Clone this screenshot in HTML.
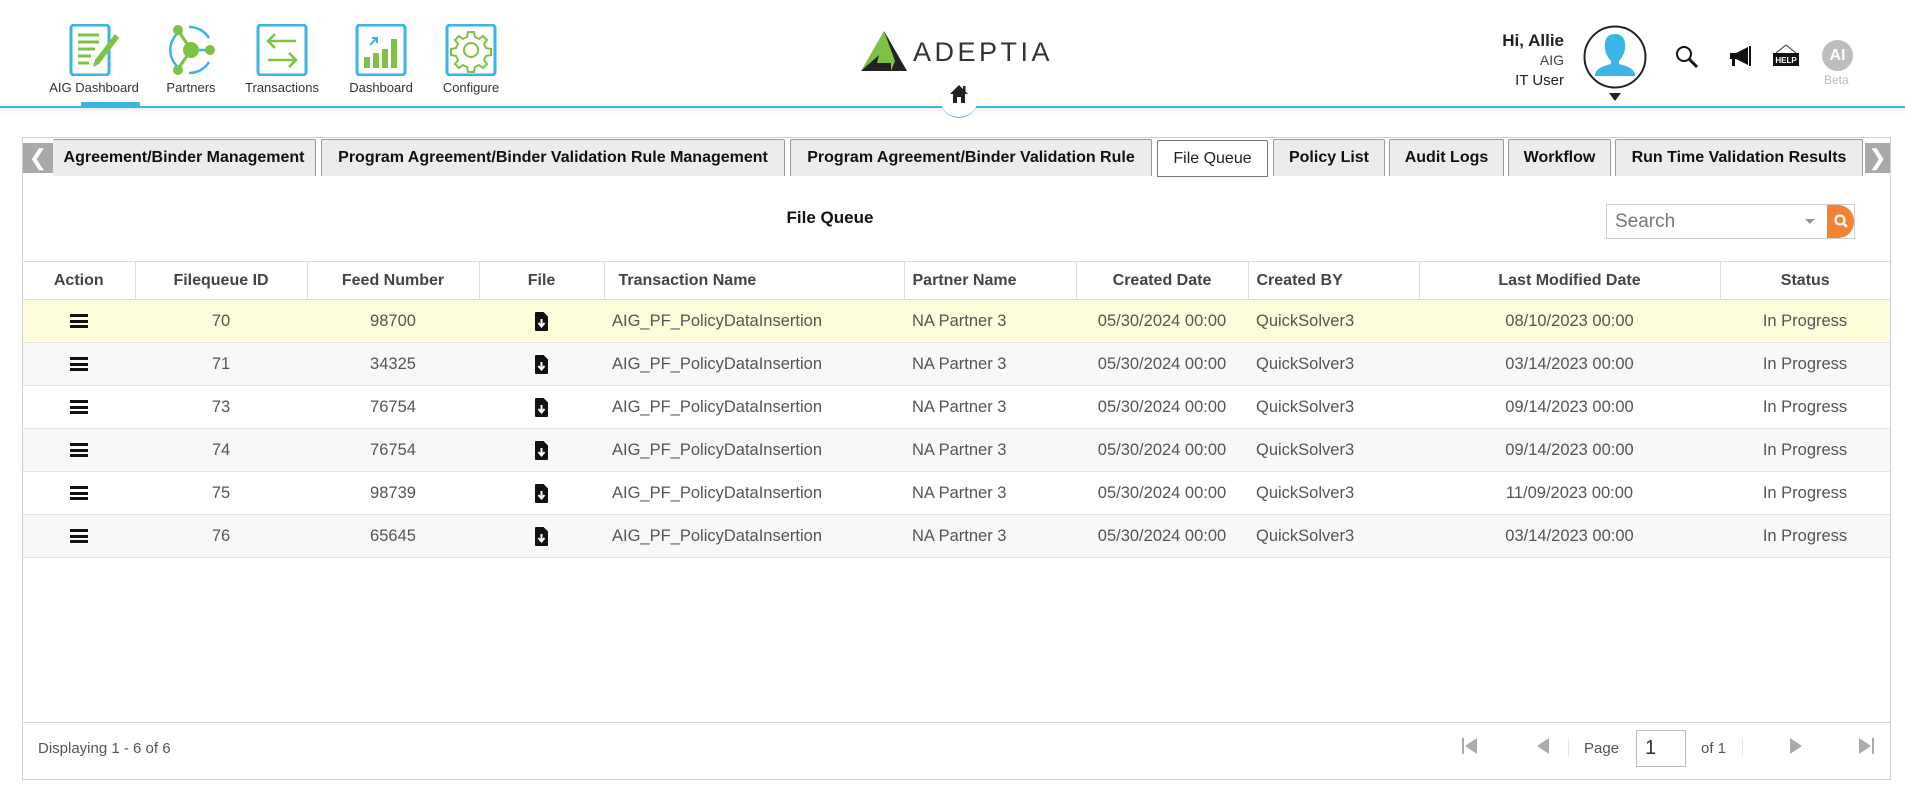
<!DOCTYPE html>
<html><head><meta charset="utf-8"><style>
*{box-sizing:border-box;margin:0;padding:0}
body{width:1905px;height:798px;background:#fff;font-family:"Liberation Sans",Arial,sans-serif;position:relative;overflow:hidden;color:#333}
.abs{position:absolute}
.nav{position:absolute;top:24px;width:52px;height:52px}
.navl{position:absolute;top:80px;font-size:13px;color:#333;white-space:nowrap;transform:translateX(-50%)}
.tab{position:absolute;top:139px;height:37px;border:1px solid #999;border-bottom:none;background:#ececec;font-weight:bold;font-size:16px;color:#111;text-align:center;line-height:36px;white-space:nowrap;border-radius:2px 2px 0 0}
.tab.act{background:#fff;font-weight:normal;border-color:#777;color:#222;font-size:16px}
table{position:absolute;left:23px;top:261px;width:1867px;border-collapse:collapse;font-size:16.5px;color:#555}
th{height:38px;font-weight:bold;color:#444;font-size:16px;border-left:1px solid #ddd;border-bottom:1px solid #ddd;border-top:1px solid #ddd;background:#fff}
th:first-child{border-left:none}
td{height:43px;border-bottom:1px solid #e2e2e2}
tr.y td{background:#fdfdd9}
tr.g td{background:#f8f8f8}
.c{text-align:center}.l{text-align:left;padding-left:8px}
.menu{display:inline-block;width:18px;height:14px;border-top:3px solid #111;border-bottom:3px solid #111;position:relative;vertical-align:middle}
.menu:after{content:"";position:absolute;left:0;right:0;top:2.5px;height:3px;background:#111}
.fi{vertical-align:middle}
</style></head><body>

<svg class="nav" style="left:69px" viewBox="0 0 52 52"><rect x="2" y="1" width="38" height="50" rx="3" fill="none" stroke="#3bb5e6" stroke-width="3"/><g stroke="#7dc242" stroke-width="3"><line x1="9" y1="11" x2="30" y2="11"/><line x1="9" y1="18" x2="30" y2="18"/><line x1="9" y1="25" x2="26" y2="25"/><line x1="9" y1="32" x2="22" y2="32"/><line x1="9" y1="39" x2="20" y2="39"/></g><path d="M46 10 L50 14 L30 40 L24 43 L26 36 Z" fill="#7dc242"/></svg>
<svg class="nav" style="left:165px" viewBox="0 0 52 52"><path d="M14 8 A23 23 0 0 0 14 44" fill="none" stroke="#3bb5e6" stroke-width="2.5"/><path d="M24 3 A23 23 0 0 1 44 14 M44 38 A23 23 0 0 1 24 49" fill="none" stroke="#3bb5e6" stroke-width="2.5"/><line x1="26" y1="26" x2="13" y2="6" stroke="#7dc242" stroke-width="3"/><line x1="26" y1="26" x2="13" y2="45" stroke="#7dc242" stroke-width="3"/><line x1="26" y1="26" x2="44" y2="26" stroke="#3bb5e6" stroke-width="2.5"/><circle cx="26" cy="26" r="8" fill="#7dc242"/><circle cx="13" cy="6" r="5" fill="#7dc242"/><circle cx="13" cy="46" r="5" fill="#7dc242"/><circle cx="45" cy="26" r="5" fill="#7dc242"/></svg>
<svg class="nav" style="left:256px" viewBox="0 0 52 52"><rect x="2" y="1" width="48" height="50" rx="3" fill="none" stroke="#3bb5e6" stroke-width="3"/><g fill="none" stroke="#7dc242" stroke-width="2.5"><path d="M40 17 H12 M19 10 L12 17 L19 24"/><path d="M12 36 H40 M33 29 L40 36 L33 43"/></g></svg>
<svg class="nav" style="left:355px" viewBox="0 0 52 52"><rect x="2" y="1" width="48" height="50" rx="3" fill="none" stroke="#3bb5e6" stroke-width="3"/><g fill="#7dc242"><rect x="9" y="33" width="6" height="11"/><rect x="18" y="29" width="6" height="15"/><rect x="27" y="25" width="6" height="19"/><rect x="36" y="15" width="6" height="29"/></g><path d="M15 21 L21 15 M17 14 H22 V19" stroke="#3bb5e6" stroke-width="2" fill="none"/></svg>
<svg class="nav" style="left:445px" viewBox="0 0 52 52"><rect x="2" y="1" width="48" height="50" rx="3" fill="none" stroke="#3bb5e6" stroke-width="3"/><path d="M23 8 h6 l1 5 l4 2 l4-3 l4 4 l-3 4 l2 4 l5 1 v6 l-5 1 l-2 4 l3 4 l-4 4 l-4-3 l-4 2 l-1 5 h-6 l-1-5 l-4-2 l-4 3 l-4-4 l3-4 l-2-4 l-5-1 v-6 l5-1 l2-4 l-3-4 l4-4 l4 3 l4-2 z" fill="none" stroke="#7dc242" stroke-width="2"/><circle cx="26" cy="26" r="7" fill="none" stroke="#7dc242" stroke-width="2"/></svg>
<div class="navl" style="left:94px">AIG Dashboard</div>
<div class="navl" style="left:191px">Partners</div>
<div class="navl" style="left:282px">Transactions</div>
<div class="navl" style="left:381px">Dashboard</div>
<div class="navl" style="left:471px">Configure</div>
<div class="abs" style="left:81px;top:102px;width:59px;height:4px;background:#3bb5e6"></div>
<div class="abs" style="left:104px;top:106px;width:0;height:0;border-left:6px solid transparent;border-right:6px solid transparent;border-top:6px solid #3bb5e6"></div>
<div class="abs" style="left:0;top:106px;width:1905px;height:1.5px;background:#3bb5e6"></div>
<div class="abs" style="left:0;top:108px;width:1905px;height:6px;background:linear-gradient(#eee,#fff)"></div>

<svg class="abs" style="left:861px;top:31px" width="46" height="40" viewBox="0 0 46 40"><path d="M23 0 L46 40 L0 40 Z" fill="#7dc242"/><path d="M23 0 L46 40 L30 40 L34 30 Z" fill="#222"/><path d="M0 40 L18 24 L16 32 L30 32 L30 40 Z" fill="#222"/></svg>
<div class="abs" style="left:913px;top:37px;font-size:27px;letter-spacing:3.5px;color:#333">ADEPTIA</div>
<div class="abs" style="left:940px;top:98px;width:38px;height:20px;border-radius:0 0 20px 20px;border-bottom:1.5px solid #3bb5e6;background:#fff"></div>
<svg class="abs" style="left:949px;top:84px" width="20" height="20" viewBox="0 0 20 20"><path d="M10 1 L19 10 H16 V19 H12 V13 H8 V19 H4 V10 H1 Z" fill="#222"/><rect x="14" y="2" width="2.5" height="5" fill="#222"/></svg>

<div class="abs" style="right:341px;top:31px;font-size:17px;font-weight:bold;color:#222;text-align:right">Hi, Allie</div>
<div class="abs" style="right:341px;top:52px;font-size:14px;color:#444;text-align:right">AIG</div>
<div class="abs" style="right:341px;top:72px;font-size:15px;color:#222;text-align:right">IT User</div>
<svg class="abs" style="left:1583px;top:25px" width="64" height="64" viewBox="0 0 64 64"><circle cx="32" cy="32" r="30.5" fill="#fff" stroke="#222" stroke-width="2"/><path d="M32 9 c8 0 11 6 10 15 c-1 6-4 10-6 12 v3 c8 2 14 4 16 10 v2 H12 v-2 c2-6 8-8 16-10 v-3 c-2-2-5-6-6-12 c-1-9 2-15 10-15z" fill="#3bb5e6"/></svg>
<div class="abs" style="left:1609px;top:93px;border-left:6px solid transparent;border-right:6px solid transparent;border-top:8px solid #222"></div>
<svg class="abs" style="left:1675px;top:45px" width="24" height="24" viewBox="0 0 24 24"><circle cx="9" cy="9" r="7" fill="none" stroke="#111" stroke-width="2"/><line x1="14" y1="14" x2="22" y2="22" stroke="#111" stroke-width="3"/></svg>
<svg class="abs" style="left:1728px;top:45px" width="26" height="24" viewBox="0 0 26 24"><path d="M2 8 h6 l12-6 v18 l-12-6 h-6z" fill="#111"/><rect x="21" y="1" width="2" height="20" fill="#111"/><rect x="4" y="14" width="3" height="7" fill="#111"/></svg>
<svg class="abs" style="left:1772px;top:44px" width="28" height="24" viewBox="0 0 28 24"><path d="M14 1 L4 9 M14 1 L24 9" stroke="#333" fill="none"/><rect x="1" y="9" width="26" height="13" fill="#111"/><text x="14" y="19" font-size="8" font-weight="bold" fill="#fff" text-anchor="middle" font-family="Liberation Sans">HELP</text></svg>
<div class="abs" style="left:1822px;top:40px;width:31px;height:31px;border-radius:50%;background:#bdbdbd;color:#fff;font-weight:bold;font-size:16px;text-align:center;line-height:31px">AI</div>
<div class="abs" style="left:1824px;top:73px;font-size:12px;color:#bbb">Beta</div>

<div class="abs" style="left:22px;top:137px;width:1869px;height:643px;border:1px solid #cfcfcf"></div>
<div class="abs" style="left:23px;top:143px;width:30px;height:30px;background:#a9a9a9;color:#fff;font-size:22px;text-align:center;line-height:30px">❮</div>
<div class="abs" style="left:1865px;top:143px;width:25px;height:30px;background:#a9a9a9;color:#fff;font-size:22px;text-align:center;line-height:30px">❯</div>
<div class="tab" style="left:53px;width:263px;border-left:none">Agreement/Binder Management</div>
<div class="tab" style="left:321px;width:464px">Program Agreement/Binder Validation Rule Management</div>
<div class="tab" style="left:790px;width:362px">Program Agreement/Binder Validation Rule</div>
<div class="tab act" style="left:1157px;width:111px;top:140px;border:1px solid #777">File Queue</div>
<div class="tab" style="left:1273px;width:112px">Policy List</div>
<div class="tab" style="left:1389px;width:115px">Audit Logs</div>
<div class="tab" style="left:1508px;width:103px">Workflow</div>
<div class="tab" style="left:1615px;width:248px">Run Time Validation Results</div>

<div class="abs" style="left:0;width:1660px;top:208px;text-align:center;font-size:17px;font-weight:bold;color:#111">File Queue</div>
<div class="abs" style="left:1606px;top:204px;width:249px;height:35px;border:1px solid #ccc;background:#fff"></div>
<div class="abs" style="left:1615px;top:211px;font-size:19px;color:#777">Search</div>
<div class="abs" style="left:1805px;top:219px;border-left:5px solid transparent;border-right:5px solid transparent;border-top:5px solid #999"></div>
<div class="abs" style="left:1827px;top:205px;width:27px;height:33px;background:#f58232;border-radius:0 16px 16px 0"></div>
<svg class="abs" style="left:1833px;top:213px" width="16" height="16" viewBox="0 0 16 16"><circle cx="7" cy="7" r="4.5" fill="none" stroke="#fff" stroke-width="2.2"/><line x1="10" y1="10" x2="14" y2="14" stroke="#fff" stroke-width="2.5"/></svg>

<svg width="0" height="0" style="position:absolute"><defs><g id="fic"><path d="M1 0 H8.5 L13 4.5 V18 Q13 19 12 19 H1 Q0 19 0 18 V1 Q0 0 1 0Z" fill="#111"/><path d="M6.5 7 V14 M3.5 11 L6.5 14.5 L9.5 11" stroke="#fff" stroke-width="2" fill="none"/></g></defs></svg>

<table>
<colgroup><col style="width:112px"><col style="width:172px"><col style="width:172px"><col style="width:125px"><col style="width:300px"><col style="width:172px"><col style="width:172px"><col style="width:171px"><col style="width:301px"><col style="width:170px"></colgroup>
<tr><th>Action</th><th>Filequeue ID</th><th>Feed Number</th><th>File</th><th class="l" style="padding-left:14px;text-align:left">Transaction Name</th><th class="l" style="text-align:left">Partner Name</th><th>Created Date</th><th class="l" style="text-align:left">Created BY</th><th>Last Modified Date</th><th>Status</th></tr>
<tr class="y"><td class="c"><span class="menu"></span></td><td class="c">70</td><td class="c">98700</td><td class="c"><svg class="fi" width="13" height="19"><use href="#fic"/></svg></td><td class="l">AIG_PF_PolicyDataInsertion</td><td class="l">NA Partner 3</td><td class="c">05/30/2024 00:00</td><td class="l">QuickSolver3</td><td class="c">08/10/2023 00:00</td><td class="c">In Progress</td></tr>
<tr class="g"><td class="c"><span class="menu"></span></td><td class="c">71</td><td class="c">34325</td><td class="c"><svg class="fi" width="13" height="19"><use href="#fic"/></svg></td><td class="l">AIG_PF_PolicyDataInsertion</td><td class="l">NA Partner 3</td><td class="c">05/30/2024 00:00</td><td class="l">QuickSolver3</td><td class="c">03/14/2023 00:00</td><td class="c">In Progress</td></tr>
<tr><td class="c"><span class="menu"></span></td><td class="c">73</td><td class="c">76754</td><td class="c"><svg class="fi" width="13" height="19"><use href="#fic"/></svg></td><td class="l">AIG_PF_PolicyDataInsertion</td><td class="l">NA Partner 3</td><td class="c">05/30/2024 00:00</td><td class="l">QuickSolver3</td><td class="c">09/14/2023 00:00</td><td class="c">In Progress</td></tr>
<tr class="g"><td class="c"><span class="menu"></span></td><td class="c">74</td><td class="c">76754</td><td class="c"><svg class="fi" width="13" height="19"><use href="#fic"/></svg></td><td class="l">AIG_PF_PolicyDataInsertion</td><td class="l">NA Partner 3</td><td class="c">05/30/2024 00:00</td><td class="l">QuickSolver3</td><td class="c">09/14/2023 00:00</td><td class="c">In Progress</td></tr>
<tr><td class="c"><span class="menu"></span></td><td class="c">75</td><td class="c">98739</td><td class="c"><svg class="fi" width="13" height="19"><use href="#fic"/></svg></td><td class="l">AIG_PF_PolicyDataInsertion</td><td class="l">NA Partner 3</td><td class="c">05/30/2024 00:00</td><td class="l">QuickSolver3</td><td class="c">11/09/2023 00:00</td><td class="c">In Progress</td></tr>
<tr class="g"><td class="c"><span class="menu"></span></td><td class="c">76</td><td class="c">65645</td><td class="c"><svg class="fi" width="13" height="19"><use href="#fic"/></svg></td><td class="l">AIG_PF_PolicyDataInsertion</td><td class="l">NA Partner 3</td><td class="c">05/30/2024 00:00</td><td class="l">QuickSolver3</td><td class="c">03/14/2023 00:00</td><td class="c">In Progress</td></tr>
</table>

<div class="abs" style="left:23px;top:722px;width:1867px;height:1px;background:#d5d5d5"></div>
<div class="abs" style="left:38px;top:740px;font-size:15px;color:#555">Displaying 1 - 6 of 6</div>
<svg class="abs" style="left:1461px;top:737px" width="18" height="18" viewBox="0 0 18 18"><rect x="1" y="1" width="2" height="16" fill="#aaa"/><path d="M16 1 L4 9 L16 17Z" fill="#aaa"/></svg>
<svg class="abs" style="left:1535px;top:737px" width="16" height="18" viewBox="0 0 16 18"><path d="M14 1 L2 9 L14 17Z" fill="#aaa"/></svg>
<div class="abs" style="left:1568px;top:738px;width:1px;height:18px;background:#e5e5e5"></div>
<div class="abs" style="left:1584px;top:740px;font-size:15px;color:#555">Page</div>
<div class="abs" style="left:1636px;top:730px;width:50px;height:37px;border:1px solid #bbb;font-size:20px;color:#333;padding:6px 0 0 8px">1</div>
<div class="abs" style="left:1701px;top:740px;font-size:15px;color:#555">of 1</div>
<div class="abs" style="left:1742px;top:738px;width:1px;height:18px;background:#e5e5e5"></div>
<svg class="abs" style="left:1788px;top:737px" width="16" height="18" viewBox="0 0 16 18"><path d="M2 1 L14 9 L2 17Z" fill="#aaa"/></svg>
<svg class="abs" style="left:1857px;top:737px" width="18" height="18" viewBox="0 0 18 18"><path d="M2 1 L14 9 L2 17Z" fill="#aaa"/><rect x="15" y="1" width="2" height="16" fill="#aaa"/></svg>
</body></html>
